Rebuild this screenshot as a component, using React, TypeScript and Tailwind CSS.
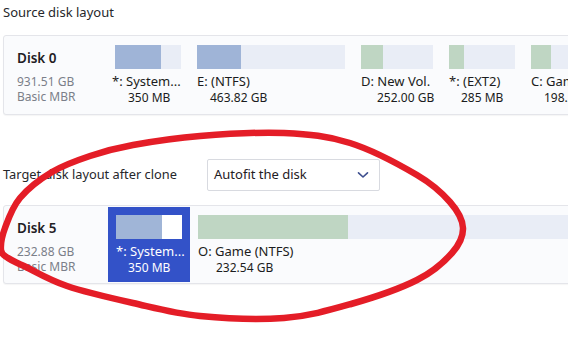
import React from "react";

type Part = {
  name: string;
  size: string;
  col: string;
  used: string;
  fill: string;
  nameCls: string;
  sizeCls: string;
};

const BLUE = "bg-[#9fb4d7]";
const GREEN = "bg-[#bfd6c3]";

const sourceParts: Part[] = [
  { name: "*: System...", size: "350 MB", col: "w-[66px]", used: "w-[46px]", fill: BLUE, nameCls: "-ml-[3px]", sizeCls: "pl-[13px]" },
  { name: "E: (NTFS)", size: "463.82 GB", col: "w-[148px]", used: "w-[44px]", fill: BLUE, nameCls: "", sizeCls: "pl-[13px]" },
  { name: "D: New Vol.", size: "252.00 GB", col: "w-[72px]", used: "w-[22px]", fill: GREEN, nameCls: "", sizeCls: "pl-[16px]" },
  { name: "*: (EXT2)", size: "285 MB", col: "w-[66px]", used: "w-[15px]", fill: GREEN, nameCls: "", sizeCls: "pl-[12px]" },
  { name: "C: Game (NTFS)", size: "198.24 GB", col: "w-[90px]", used: "w-[20px]", fill: GREEN, nameCls: "", sizeCls: "pl-[13px]" },
];

// hand-drawn red ring, traced from the picture
const ring: [number, number][] = [
  [1, 250], [5, 228], [20, 198], [52, 172], [90, 156], [133, 145], [200, 136],
  [284, 133], [350, 143], [417, 175], [450, 202], [463, 228], [452, 253],
  [417, 280], [351, 304], [284, 318], [200, 316], [133, 303], [67, 286],
  [24, 266], [8, 258],
];

function smoothPath(pts: [number, number][]) {
  const n = pts.length;
  let d = `M${pts[0][0]},${pts[0][1]}`;
  for (let i = 0; i < n; i++) {
    const p0 = pts[(i - 1 + n) % n];
    const p1 = pts[i];
    const p2 = pts[(i + 1) % n];
    const p3 = pts[(i + 2) % n];
    const c1x = p1[0] + (p2[0] - p0[0]) / 6;
    const c1y = p1[1] + (p2[1] - p0[1]) / 6;
    const c2x = p2[0] - (p3[0] - p1[0]) / 6;
    const c2y = p2[1] - (p3[1] - p1[1]) / 6;
    d += ` C${c1x.toFixed(1)},${c1y.toFixed(1)} ${c2x.toFixed(1)},${c2y.toFixed(1)} ${p2[0]},${p2[1]}`;
  }
  return d + "Z";
}

function DiskInfo({ name, cap }: { name: string; cap: string }) {
  return (
    <div className="w-[104px] shrink-0 pl-[13px] pt-[12px]">
      <div className="text-[13.5px] font-semibold leading-[20px] text-[#1f2024]">{name}</div>
      <div className="mt-[6px] text-[12px] leading-[15px] text-[#7b7f89]">{cap}</div>
      <div className="text-[12px] leading-[15px] text-[#7b7f89]">Basic MBR</div>
    </div>
  );
}

function PartCol({ p }: { p: Part }) {
  return (
    <div className={`${p.col} shrink-0`}>
      <div className="flex h-[24px] w-full bg-[#e9edf6]">
        <div className={`${p.used} h-full ${p.fill}`} />
      </div>
      <div className={`mt-[5px] whitespace-nowrap text-[13px] leading-[15px] text-[#1b1c20] ${p.nameCls}`}>{p.name}</div>
      <div className={`mt-[1px] whitespace-nowrap text-[12px] leading-[15px] text-[#1b1c20] ${p.sizeCls}`}>{p.size}</div>
    </div>
  );
}

export default function App() {
  return (
    <div className="relative h-[339px] w-[568px] overflow-hidden bg-white font-['Noto_Sans','Open_Sans',sans-serif]">
      <div className="pl-[3px] pt-[3px] text-[13px] leading-[18px] text-[#26272b]">Source disk layout</div>

      <div className="ml-[3px] mt-[14px] flex h-[80px] w-[620px] rounded-[3px] border border-[#e4e5ea] bg-[#fafbfd] shadow-[0_1px_1px_rgba(0,0,0,0.04)]">
        <DiskInfo name="Disk 0" cap="931.51 GB" />
        <div className="flex gap-[16px] pl-[7px] pt-[9px]">
          {sourceParts.map((p) => (
            <PartCol key={p.name} p={p} />
          ))}
        </div>
      </div>

      <div className="mt-[43px] flex h-[33px] items-center">
        <div className="w-[207px] shrink-0 pl-[3px] text-[12.8px] text-[#26272b]">Target disk layout after clone</div>
        <div className="flex h-[32px] w-[173px] items-center justify-between rounded-[2px] border border-[#d8dae0] bg-white pl-[6px] pr-[10px] text-[13px] text-[#1f2024]">
          <span>Autofit the disk</span>
          <svg width="12" height="8" viewBox="0 0 12 8" fill="none">
            <path d="M1.5 1.8 L6 6 L10.5 1.8" stroke="#3e4f8f" strokeWidth="1.6" strokeLinecap="round" strokeLinejoin="round" />
          </svg>
        </div>
      </div>

      <div className="ml-[3px] mt-[14px] flex h-[79px] w-[620px] rounded-[3px] border border-[#e4e5ea] bg-[#fafbfd] shadow-[0_1px_1px_rgba(0,0,0,0.04)]">
        <DiskInfo name="Disk 5" cap="232.88 GB" />
        <div className="flex pt-[1px]">
          <div className="h-[75px] w-[82px] shrink-0 bg-[#3352c8] px-[8px] pt-[8px] text-white">
            <div className="flex h-[24px] w-[66px] bg-white">
              <div className="h-full w-[46px] bg-[#a0b5d7]" />
            </div>
            <div className="mt-[5px] whitespace-nowrap text-[13px] leading-[15px]">*: System...</div>
            <div className="mt-[1px] whitespace-nowrap pl-[12px] text-[12px] leading-[15px]">350 MB</div>
          </div>
          <div className="w-[420px] shrink-0 pl-[8px] pt-[8px]">
            <div className="flex h-[24px] w-full bg-[#e9edf6]">
              <div className={`h-full w-[150px] ${GREEN}`} />
            </div>
            <div className="mt-[5px] whitespace-nowrap text-[13px] leading-[15px] text-[#1b1c20]">O: Game (NTFS)</div>
            <div className="mt-[1px] whitespace-nowrap pl-[18px] text-[12px] leading-[15px] text-[#1b1c20]">232.54 GB</div>
          </div>
        </div>
      </div>

      <svg className="pointer-events-none absolute left-0 top-0" width="568" height="339" viewBox="0 0 568 339">
        <path d={smoothPath(ring)} fill="none" stroke="#e41d27" strokeWidth="6.5" strokeLinejoin="round" />
      </svg>
    </div>
  );
}
